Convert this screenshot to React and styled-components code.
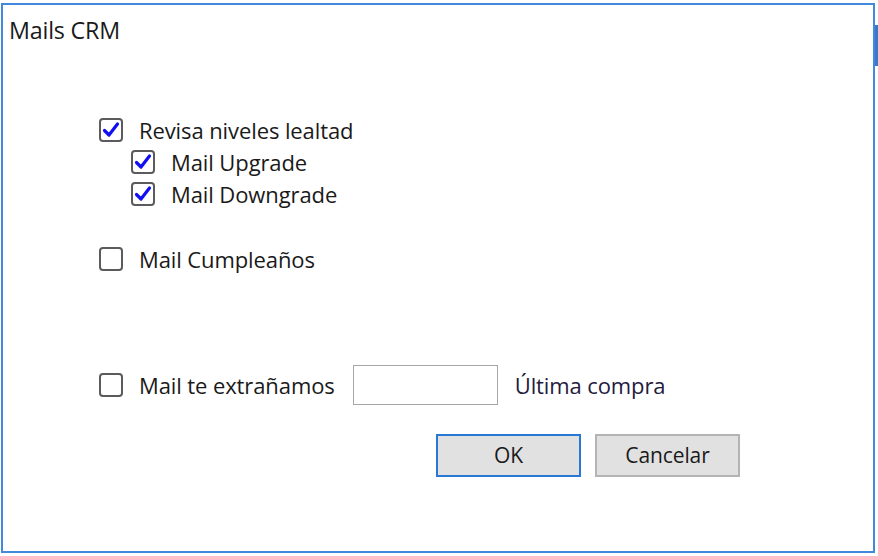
import React, { useState } from "react"
import styled, { createGlobalStyle } from "styled-components"

const Global = createGlobalStyle`
  html, body {
    margin: 0;
    padding: 0;
    background: #ffffff;
  }
  body {
    font-family: "Open Sans", "Noto Sans", "Liberation Sans", sans-serif;
    color: #1a1a1a;
  }
`

const Desktop = styled.div`
  display: flex;
  width: 878px;
  height: 556px;
  overflow: hidden;
`

const Dialog = styled.div`
  box-sizing: border-box;
  margin: 3px 0 0 1px;
  width: 874px;
  height: 550px;
  border: 2px solid #4189dc;
  background: #ffffff;
  display: flex;
  flex-direction: column;
`

const BehindStrip = styled.div`
  flex: 1;
  padding-top: 25px;

  div {
    height: 41px;
    background: #3b78c6;
  }
`

const Title = styled.div`
  font-size: 23.3px;
  letter-spacing: -0.2px;
  padding: 11px 0 0 6px;
  line-height: 28px;
`

const Body = styled.div`
  padding: 70px 0 0 96px;
  display: flex;
  flex-direction: column;
`

const Group = styled.div`
  display: flex;
  flex-direction: column;
  margin-bottom: ${({ $gap }) => $gap}px;
`

const Row = styled.label`
  display: flex;
  align-items: center;
  height: 32px;
  padding-left: ${({ $indent }) => ($indent ? 32 : 0)}px;
  font-size: 22px;
  letter-spacing: -0.1px;
  cursor: default;
`

const Box = styled.span`
  box-sizing: border-box;
  width: 24px;
  height: 24px;
  border: 2px solid #5b5b5b;
  border-radius: 4px;
  margin-right: 16px;
  display: flex;
  align-items: center;
  justify-content: center;
  flex-shrink: 0;
`

const TextInput = styled.input`
  box-sizing: border-box;
  width: 145px;
  height: 40px;
  border: 1px solid #a6a6a6;
  margin: 0 17px 0 18px;
  outline: none;
  font: inherit;
`

const Hint = styled.span`
  font-size: 22px;
  letter-spacing: -0.1px;
  color: #241a3e;
`

const Buttons = styled.div`
  display: flex;
  gap: 14px;
  padding: 33px 0 0 433px;
`

const Button = styled.button`
  box-sizing: border-box;
  width: 145px;
  height: 43px;
  background: #e1e1e1;
  border: ${({ $primary }) => ($primary ? "2px solid #2a78d6" : "2px solid #b4b4b4")};
  font-family: inherit;
  font-size: 21px;
  letter-spacing: -0.1px;
  color: #1a1a1a;
  padding: 0 0 2px;
`

const Check = ({ checked, onToggle }) => (
  <Box onClick={onToggle}>
    {checked && (
      <svg width="18" height="18" viewBox="0 0 18 18">
        <path
          d="M2.5 9.5 L7 14 L15.5 3"
          fill="none"
          stroke="#1010f2"
          strokeWidth="3.2"
          strokeLinecap="round"
          strokeLinejoin="round"
        />
      </svg>
    )}
  </Box>
)

const CheckRow = ({ label, indent, value, onChange, children }) => (
  <Row $indent={indent}>
    <Check checked={value} onToggle={() => onChange(!value)} />
    {label}
    {children}
  </Row>
)

export default function App() {
  const [lealtad, setLealtad] = useState(true)
  const [upgrade, setUpgrade] = useState(true)
  const [downgrade, setDowngrade] = useState(true)
  const [cumple, setCumple] = useState(false)
  const [extr, setExtr] = useState(false)

  return (
    <Desktop>
      <Global />
      <Dialog>
        <Title>Mails CRM</Title>
        <Body>
          <Group $gap={33}>
            <CheckRow label="Revisa niveles lealtad" value={lealtad} onChange={setLealtad} />
            <CheckRow label="Mail Upgrade" indent value={upgrade} onChange={setUpgrade} />
            <CheckRow label="Mail Downgrade" indent value={downgrade} onChange={setDowngrade} />
          </Group>
          <Group $gap={94}>
            <CheckRow label="Mail Cumpleaños" value={cumple} onChange={setCumple} />
          </Group>
          <Group $gap={0}>
            <CheckRow label="Mail te extrañamos" value={extr} onChange={setExtr}>
              <TextInput />
              <Hint>Última compra</Hint>
            </CheckRow>
          </Group>
        </Body>
        <Buttons>
          <Button $primary>OK</Button>
          <Button>Cancelar</Button>
        </Buttons>
      </Dialog>
      <BehindStrip>
        <div />
      </BehindStrip>
    </Desktop>
  )
}
